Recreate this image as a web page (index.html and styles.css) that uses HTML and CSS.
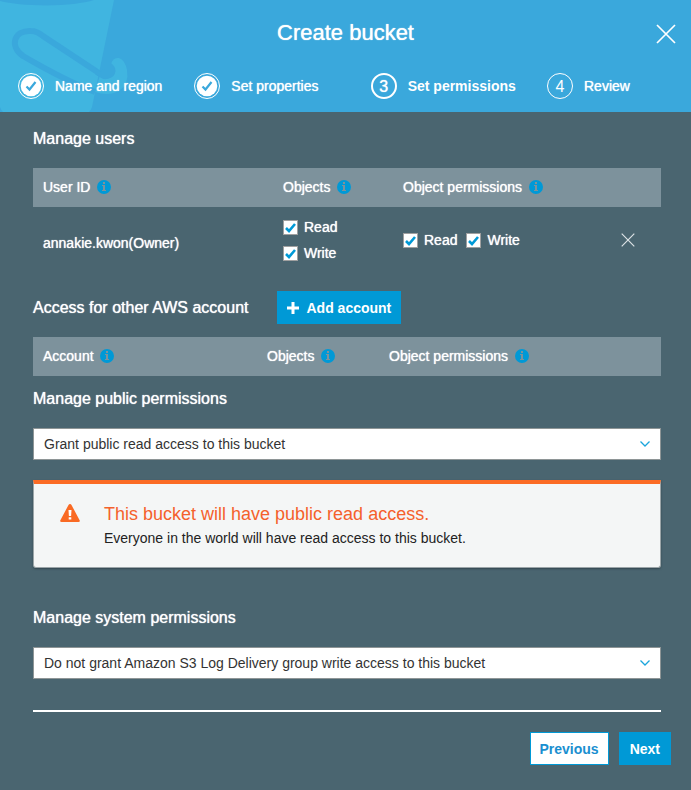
FILE: index.html
```html
<!DOCTYPE html>
<html lang="en">
<head>
<meta charset="utf-8">
<title>Create bucket</title>
<meta name="viewport" content="width=device-width, initial-scale=1">
<link rel="stylesheet" href="styles.css">
</head>
<body>
<svg class="sprite" aria-hidden="true">
  <symbol id="info" viewBox="0 0 14 14"><path fill-rule="evenodd" d="M7 0a7 7 0 1 1 0 14A7 7 0 0 1 7 0ZM6 2v2h2V2ZM5 5v1h1v4H5v1h4v-1H8V5Z"/></symbol>
  <symbol id="tick" viewBox="0 0 15 15"><path d="M3 8l3 3 6-7" fill="none" stroke="currentColor" stroke-width="2.6"/></symbol>
  <symbol id="done" viewBox="0 0 26 26"><circle cx="13" cy="13" r="12.5" fill="none" stroke="#fff"/><circle cx="13" cy="13" r="10.3" fill="#fff"/><path d="M8.500 13.500l3 3 6-7.500" fill="none" stroke="#3aa8dc" stroke-width="2.2"/></symbol>
  <symbol id="cross" viewBox="0 0 20 20"><path d="M1 1l18 18M19 1L1 19" fill="none" stroke="currentColor" stroke-width="1.700"/></symbol>
  <symbol id="chevron" viewBox="0 0 10 6"><path d="M.5 .5L5 5 9.500 .5" fill="none" stroke="currentColor" stroke-width="1.300"/></symbol>
</svg>
<header class="header">
  <svg class="bucket" viewBox="0 0 135 112" aria-hidden="true">
    <path fill="#40b5e0" d="M0 0H114L92 107Q91 110 89 112H3Q1 110 0 107Z"/>
    <path fill="#3aa8dc" d="M0 0H94Q78 5 46 5.500Q16 5 0 1Z"/>
    <path fill="#40b5e0" d="M111 64Q113 57 119 58Q125 60 127 70Q129 84 120 90Q110 97 95 92L101 72L108 78Q115 77 115 71Q114 66 111 64Z"/>
    <path fill="none" stroke="#3aa8dc" stroke-width="6" d="M95 92Q68 82 23 56C9 46 14 30 31 31Q37 31 43 36L96 71Q100 75 104 75"/>
    <path fill="#3aa8dc" d="M95 68L101 72L102 70Q105 70 107 67L111 63Q117 68 115 73Q112 80 103 79L95 74Z"/>
  </svg>
  <h1 class="title">Create bucket</h1>
  <button class="close" type="button" aria-label="Close"><svg><use href="#cross"/></svg></button>
  <ol class="steps">
    <li class="step"><svg class="badge"><use href="#done"/></svg>Name and region</li>
    <li class="step"><svg class="badge"><use href="#done"/></svg>Set properties</li>
    <li class="step current" aria-current="step"><span class="badge number">3</span>Set permissions</li>
    <li class="step"><span class="badge number">4</span>Review</li>
  </ol>
</header>
<main class="content">
  <h2>Manage users</h2>
  <table class="users">
    <thead>
      <tr>
        <th scope="col">User ID <svg class="info"><use href="#info"/></svg></th>
        <th scope="col">Objects <svg class="info"><use href="#info"/></svg></th>
        <th scope="col">Object permissions <svg class="info"><use href="#info"/></svg></th>
        <td></td>
      </tr>
    </thead>
    <tbody>
      <tr>
        <td class="name">annakie.kwon(Owner)</td>
        <td><div class="checks stacked">
          <label class="check"><span class="box"><input type="checkbox" checked><svg><use href="#tick"/></svg></span>Read</label>
          <label class="check"><span class="box"><input type="checkbox" checked><svg><use href="#tick"/></svg></span>Write</label>
        </div></td>
        <td><div class="checks">
          <label class="check"><span class="box"><input type="checkbox" checked><svg><use href="#tick"/></svg></span>Read</label>
          <label class="check"><span class="box"><input type="checkbox" checked><svg><use href="#tick"/></svg></span>Write</label>
        </div></td>
        <td><button class="remove" type="button" aria-label="Remove"><svg><use href="#cross"/></svg></button></td>
      </tr>
    </tbody>
  </table>
  <div class="accounts-head">
    <h2>Access for other AWS account</h2>
    <button class="btn primary add" type="button"><svg viewBox="0 0 12 12" aria-hidden="true"><path d="M6 0v12M0 6h12" stroke="currentColor" stroke-width="3"/></svg>Add account</button>
  </div>
  <table class="accounts">
    <thead>
      <tr>
        <th scope="col">Account <svg class="info"><use href="#info"/></svg></th>
        <th scope="col">Objects <svg class="info"><use href="#info"/></svg></th>
        <th scope="col">Object permissions <svg class="info"><use href="#info"/></svg></th>
      </tr>
    </thead>
  </table>
  <h2 class="public-title"><label for="public">Manage public permissions</label></h2>
  <div class="select">
    <select id="public"><option>Grant public read access to this bucket</option></select>
    <svg><use href="#chevron"/></svg>
  </div>
  <section class="alert" role="alert">
    <svg class="warning" viewBox="0 0 20 18" aria-hidden="true"><path fill="#f96a24" d="M10 0q1 0 1.500 1l8 15q1 2-1 2h-17q-2 0-1-2l8-15Q9 0 10 0Z"/><path fill="#fff" d="M8.500 6h3l-.4 6H8.900ZM8.700 13.200h2.600v2.400H8.700Z"/></svg>
    <div>
      <h3>This bucket will have public read access.</h3>
      <p>Everyone in the world will have read access to this bucket.</p>
    </div>
  </section>
  <h2><label for="system">Manage system permissions</label></h2>
  <div class="select system">
    <select id="system"><option>Do not grant Amazon S3 Log Delivery group write access to this bucket</option></select>
    <svg><use href="#chevron"/></svg>
  </div>
</main>
<footer class="footer">
  <button class="btn secondary" type="button">Previous</button>
  <button class="btn primary" type="button">Next</button>
</footer>
</body>
</html>
```
FILE: styles.css
```css
* { box-sizing: border-box; }
body {
  margin: 0;
  min-height: 100vh;
  background: #4a6570;
  color: #fff;
  font: 14px/20px "Liberation Sans", Arial, sans-serif;
  text-shadow: 0 0 1px #fff;
}
svg { display: block; }
button, select { font: inherit; }
h1, h2, h3, p, ol { margin: 0; padding: 0; }
.sprite { position: absolute; width: 0; height: 0; }

.header { position: relative; background: #3aa8dc; padding: 20px 0 13px; overflow: hidden; }
.bucket { position: absolute; left: 0; top: 0; width: 135px; height: 112px; }
.title {
  position: relative;
  font-size: 22px;
  line-height: 26px;
  font-weight: normal;
  text-align: center;
}
.close {
  position: absolute;
  top: 24px;
  right: 15px;
  padding: 0;
  border: 0;
  background: none;
  color: #fff;
}
.close svg { width: 20px; height: 20px; }
.steps {
  position: relative;
  display: grid;
  grid-template-columns: repeat(3, 1fr) 144px;
  margin-top: 27px;
  padding-left: 18px;
  list-style: none;
}
.step { display: flex; align-items: center; gap: 11px; }
.badge { flex: none; width: 26px; height: 26px; }
.number {
  border: 1px solid #fff;
  border-radius: 50%;
  font-size: 16px;
  line-height: 25px;
  font-weight: normal;
  text-align: center;
  text-shadow: none;
}
.current { font-weight: bold; text-shadow: none; }
.current .number { border-width: 2px; line-height: 23px; text-shadow: 0 0 1px #fff; }

.content { padding: 17px 30px 0 33px; }
h2 { font-size: 16px; line-height: 20px; font-weight: normal; }
table { width: 100%; table-layout: fixed; border-collapse: collapse; margin-top: 19px; }
th, td { padding: 0 10px; text-align: left; font-weight: normal; }
th { padding-bottom: 2px; }
thead { background: #7d929c; }
thead tr { height: 39px; }
tbody tr { height: 66px; }
.users th:nth-child(1) { width: 240px; }
.users th:nth-child(2) { width: 120px; }
.users td:nth-child(4) { width: 50px; }
.accounts th:nth-child(1) { width: 224px; }
.accounts th:nth-child(2) { width: 122px; }
.info { display: inline-block; width: 14px; height: 14px; margin-left: 3px; vertical-align: -2px; fill: #0099d6; }
.name { padding-top: 6px; }
.checks { display: flex; gap: 9px; }
.stacked { flex-direction: column; gap: 6px; }
.check { display: flex; align-items: center; gap: 6px; }
.box { position: relative; width: 15px; height: 15px; }
.box input {
  display: block;
  appearance: none;
  width: 15px;
  height: 15px;
  margin: 0;
  border: 1px solid #a0a0a0;
  background: #fff;
}
.box svg { position: absolute; inset: 0; width: 15px; height: 15px; color: #0099d6; pointer-events: none; }
.box input:not(:checked) + svg { display: none; }
.remove { display: block; padding: 0; border: 0; background: none; color: #dce2e5; }
.remove svg { width: 14px; height: 14px; stroke-width: 2px; }

.btn { height: 33px; padding: 0 10px; border: 1px solid #0099d6; font-weight: bold; text-shadow: none; }
.primary { background: #0099d6; color: #fff; }
.secondary { background: #fff; color: #1a8fd0; padding: 0 9px; }
.accounts-head { display: flex; align-items: center; gap: 28px; margin-top: 18px; }
.add { display: flex; align-items: center; gap: 8px; padding: 0 9px; }
.add svg { width: 12px; height: 12px; }
.accounts { margin-top: 13px; }
.public-title { margin-top: 13px; }

.select { position: relative; margin-top: 19px; }
.select select {
  display: block;
  appearance: none;
  width: 100%;
  height: 32px;
  padding: 0 40px 0 10px;
  border: 1px solid #8e9596;
  border-radius: 0;
  background: #fff;
  color: #333;
  text-shadow: none;
}
.select svg { position: absolute; right: 11px; top: 13px; width: 10px; height: 6px; color: #1aa5dc; pointer-events: none; }
.alert {
  display: flex;
  gap: 24px;
  margin: 20px 0 40px;
  padding: 20px 26px 19px;
  border: 1px solid #9ba5a8;
  border-top: 4px solid #fb6b25;
  border-radius: 0 0 3px 3px;
  background: #f4f6f6;
  box-shadow: 0 1px 2px #33464f;
  color: #222;
  text-shadow: none;
}
.warning { width: 20px; height: 18px; }
.alert h3 { color: #f4612c; font-size: 18px; line-height: 20px; font-weight: normal; }
.alert p { margin-top: 4px; }
.system { padding-bottom: 31px; border-bottom: 2px solid #fff; }
.footer { display: flex; justify-content: flex-end; gap: 10px; padding: 20px 20px 25px; }
```
